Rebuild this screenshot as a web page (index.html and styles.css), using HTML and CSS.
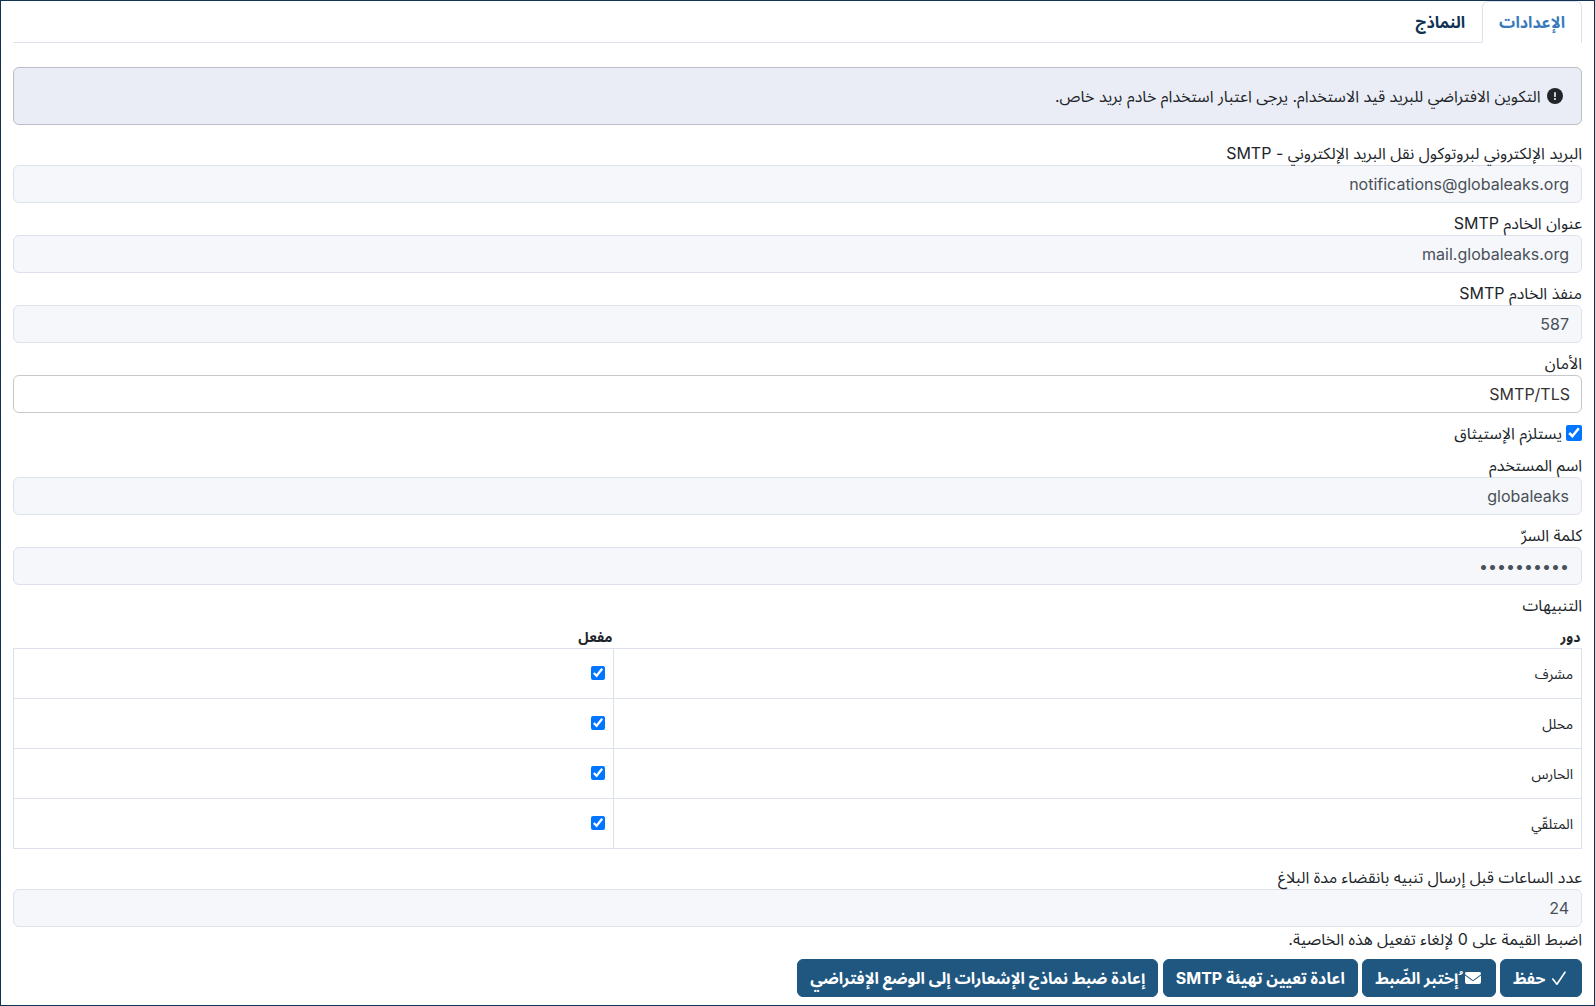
FILE: index.html
```html
<!DOCTYPE html>
<html lang="ar" dir="rtl">
<head>
<meta charset="utf-8">
<title>الإعدادات</title>
<link rel="stylesheet" href="styles.css">
</head>
<body>
<nav class="tabs"><a class="tab active">الإعدادات</a><a class="tab">النماذج</a></nav>
<main>
<div class="alert"><svg class="icon" viewBox="0 0 20 16"><circle cx="10" cy="8" r="8" fill="currentColor"/><path d="M10 4.8v3.4" stroke="#eaedf5" stroke-width="1.7" stroke-linecap="round"/><circle cx="10" cy="11" r="1.1" fill="#eaedf5"/></svg> <span>التكوين الافتراضي للبريد قيد الاستخدام. يرجى اعتبار استخدام خادم بريد خاص.</span></div>
<div class="group"><label>البريد الإلكتروني لبروتوكول نقل البريد الإلكتروني - SMTP</label><input class="control" disabled value="notifications@globaleaks.org"></div>
<div class="group"><label>عنوان الخادم SMTP</label><input class="control" disabled value="mail.globaleaks.org"></div>
<div class="group"><label>منفذ الخادم SMTP</label><input class="control" disabled value="587"></div>
<div class="group"><label>الأمان</label><select class="control"><option>SMTP/TLS</option></select></div>
<div class="check-group"><input type="checkbox" class="check" checked><label>يستلزم الإستيثاق</label></div>
<div class="group"><label>اسم المستخدم</label><input class="control" disabled value="globaleaks"></div>
<div class="group"><label>كلمة السرّ</label><input class="control" type="password" disabled value="aaaaaaaaaa"></div>
<div class="notifications"><label>التنبيهات</label>
<table>
<thead><tr><th class="role">دور</th><th>مفعل</th></tr></thead>
<tbody>
<tr><td>مشرف</td><td><input type="checkbox" checked></td></tr>
<tr><td>محلل</td><td><input type="checkbox" checked></td></tr>
<tr><td>الحارس</td><td><input type="checkbox" checked></td></tr>
<tr><td>المتلقّي</td><td><input type="checkbox" checked></td></tr>
</tbody></table></div>
<div class="hours"><label>عدد الساعات قبل إرسال تنبيه بانقضاء مدة البلاغ</label><input class="control" disabled value="24"><div class="hint">اضبط القيمة على 0 لإلغاء تفعيل هذه الخاصية.</div></div>
<div class="actions">
<button><svg class="icon" viewBox="0 0 20 16"><path d="m3.8 9 4.1 5.2L16 2.2" fill="none" stroke="currentColor" stroke-width="1.6" stroke-linecap="round" stroke-linejoin="round"/></svg> <span>حفظ</span></button>
<button><svg class="icon" viewBox="-64 0 640 512"><path fill="currentColor" d="M48 64a48 48 0 0 0-29 86l218 164a32 32 0 0 0 38 0l218-164a48 48 0 0 0-29-86zM0 176v208a64 64 0 0 0 64 64h384a64 64 0 0 0 64-64V176L294 339a64 64 0 0 1-76 0z"/></svg> ُإختبر الضّبط</button>
<button>اعادة تعيين تهيئة SMTP</button>
<button>إعادة ضبط نماذج الإشعارات إلى الوضع الإفتراضي</button>
</div>
</main>
</body>
</html>
```
FILE: styles.css
```css
* { box-sizing: border-box; }
body { margin: 0; height: 1006px; border: 1px solid #103253; padding: 0 12px; overflow: hidden; background: #fff; color: #212529; font: 16px/24px Inter, "Noto Sans Arabic", "DejaVu Sans", sans-serif; }
.tabs { display: flex; height: 42px; border-bottom: 1px solid #dce1ec; }
.tab { height: 42px; padding: 8px 16px; border: 1px solid transparent; color: #103253; font-weight: 700; }
.tab.active { color: #377abc; background: #fff; border-color: #dce1ec #dce1ec #fff; border-radius: 6px 6px 0 0; }
.alert { margin: 24px 0 16px; height: 58px; padding: 16px; border: 1px solid #b9bec6; border-radius: 6px; background: #eaedf5; }
.icon { width: 20px; height: 16px; vertical-align: -2px; }
.group { height: 70px; }
label { display: block; height: 24px; white-space: nowrap; }
.control { display: block; width: 100%; height: 38px; padding: 6px 12px; border: 1px solid #dce1ec; border-radius: 6px; background: #f5f7fb; color: #495057; font: inherit; appearance: none; }
select.control { padding-inline: 11px; background: #fff; border-color: #c5c7ca; color: #333; }
.check-group { display: flex; height: 32px; gap: 4px; }
input[type="checkbox"] { display: block; margin: 0; width: 14px; height: 14px; accent-color: #0075ff; }
.check-group .check { width: 16px; height: 16px; margin-top: 4px; }
.notifications { height: 272px; }
table { width: 100%; margin-top: 8px; border-collapse: collapse; table-layout: fixed; font-size: 14px; line-height: 21px; }
th { height: 23px; padding: 0 1px; text-align: start; }
.role { width: 968px; }
td { height: 50px; padding: 8px; border: 1px solid #dce1ec; }
.actions { display: flex; gap: 4.4px; margin-top: 8px; }
.hint { height: 24px; }
button { height: 38px; border: 1px solid #205781; border-radius: 6px; padding: 6px 12px; background: #205781; color: #fff; font: inherit; font-weight: 700; white-space: nowrap; }
```
